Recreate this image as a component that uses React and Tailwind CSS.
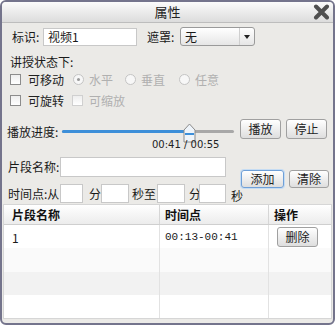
import React from 'react';

const font = { fontFamily: '"Noto Sans CJK SC", "Liberation Sans", sans-serif' };

const Btn = ({ children, active, className = '' }) => (
    <div className={`flex items-center justify-center rounded-[3px] border text-[12px] text-[#222] bg-gradient-to-b from-white to-[#dedede] ${active ? 'border-[#6fa0d8] shadow-[0_0_0_1px_#c5dcf3]' : 'border-[#a0a0a0]'} ${className}`}>
        {children}
    </div>
);

const Check = ({ disabled }) => (
    <div className={`w-[11px] h-[11px] border bg-gradient-to-b from-[#eeeeee] to-white ${disabled ? 'border-[#d0d0d0]' : 'border-[#8c8c8c]'}`} />
);

const Radio = ({ checked }) => (
    <div className="w-[11px] h-[11px] rounded-full border border-[#c4c4c4] bg-[#f7f7f7] flex items-center justify-center">
        {checked && <div className="w-[3px] h-[3px] rounded-full bg-[#9a9a9a]" />}
    </div>
);

const Field = ({ className = '' }) => (
    <div className={`bg-white border border-[#c8c8c8] ${className}`} />
);

export default function App() {
    const rows = [
        { name: '1', time: '00:13-00:41', bg: 'bg-white' },
        { bg: 'bg-[#fafafa]' },
        { bg: 'bg-[#f2f2f2]' },
        { bg: 'bg-white' },
    ];

    return (
        <div className="w-[335px] h-[325px] bg-white" style={font}>
            <div className="w-full h-full flex flex-col rounded-[6px] border-2 border-[#74748c] bg-[#ebeae7] overflow-hidden text-[12px] text-[#1a1a1a]">
                {/* 标题栏 */}
                <div className="relative h-[21px] shrink-0 flex items-center justify-center bg-gradient-to-b from-[#fbfbfb] to-[#dcdcdc] border-b border-[#bdbdbd]">
                    <span className="text-[13px] text-[#222]">属性</span>
                    <svg className="absolute right-[3px] top-[2px]" width="17" height="16" viewBox="0 0 17 16">
                        <path d="M3 2.5 L14 13.5 M14 2.5 L3 13.5" stroke="#4f4f4f" strokeWidth="4" strokeLinecap="round" />
                    </svg>
                </div>

                {/* 标识 / 遮罩 */}
                <div className="mt-[4px] h-[19px] flex items-center pl-[10px]">
                    <span className="w-[31px]">标识:</span>
                    <div className="w-[94px] h-[18px] bg-white border border-[#c8c8c8] flex items-center pl-[4px] text-[12px]">视频1</div>
                    <span className="ml-[10px] w-[33px]">遮罩:</span>
                    <div className="w-[75px] h-[19px] rounded-[3px] border border-[#9a9a9a] bg-gradient-to-b from-white to-[#e6e6e6] flex items-center">
                        <span className="flex-1 pl-[4px]">无</span>
                        <div className="w-[15px] h-full border-l border-[#cfcfcf] flex items-center justify-center">
                            <svg width="6" height="4" viewBox="0 0 6 4"><path d="M0 0 H6 L3 4 Z" fill="#222" /></svg>
                        </div>
                    </div>
                </div>

                <div className="mt-[7px] h-[17px] flex items-center pl-[8px]">讲授状态下:</div>

                <div className="mt-[1px] h-[17px] flex items-center pl-[8px] gap-[7px]">
                    <Check />
                    <span className="text-[#222]">可移动</span>
                    <div className="ml-[2px] flex items-center gap-[5px] text-[#b0b0b0]"><Radio checked /><span>水平</span></div>
                    <div className="ml-[5px] flex items-center gap-[5px] text-[#b0b0b0]"><Radio /><span>垂直</span></div>
                    <div className="ml-[7px] flex items-center gap-[5px] text-[#b0b0b0]"><Radio /><span>任意</span></div>
                </div>

                <div className="mt-[4px] h-[17px] flex items-center pl-[8px] gap-[7px]">
                    <Check />
                    <span className="text-[#222]">可旋转</span>
                    <div className="ml-[1px] flex items-center gap-[6px] text-[#b0b0b0]"><Check disabled /><span>可缩放</span></div>
                </div>

                {/* 播放进度 */}
                <div className="mt-[12px] h-[30px] flex items-start pl-[5px]">
                    <span className="w-[55px] mt-[2px]">播放进度:</span>
                    <div className="relative w-[172px] h-[30px]">
                        <div className="absolute left-0 right-0 top-[9px] h-[3px] rounded-full bg-[#a8a8a8]" />
                        <div className="absolute left-0 w-[127px] top-[9px] h-[3px] rounded-full bg-[#3d8fd9]" />
                        <svg className="absolute left-[121px] top-[2px]" width="13" height="20" viewBox="0 0 13 20">
                            <path d="M1 19 L1 7 L6.5 1 L12 7 L12 19 Z" fill="#eef4fa" stroke="#8a8a8a" strokeWidth="1" />
                            <path d="M2 11 L11 11" stroke="#3d8fd9" strokeWidth="2" />
                        </svg>
                        <span className="absolute left-[90px] top-[16px] text-[10px] text-[#222] whitespace-nowrap" style={{ fontFamily: '"DejaVu Sans", sans-serif' }}>00:41 / 00:55</span>
                    </div>
                    <Btn className="ml-[6px] w-[41px] h-[20px] -mt-[2px]">播放</Btn>
                    <Btn className="ml-[5px] w-[41px] h-[20px] -mt-[2px]">停止</Btn>
                </div>

                {/* 片段 */}
                <div className="mt-[6px] flex items-center pl-[6px]">
                    <div className="flex flex-col">
                        <div className="h-[20px] flex items-center">
                            <span className="w-[52px]">片段名称:</span>
                            <Field className="w-[166px] h-[20px]" />
                        </div>
                        <div className="mt-[7px] h-[19px] flex items-center">
                            <span className="w-[52px]">时间点:从</span>
                            <Field className="w-[23px] h-[19px]" />
                            <span className="ml-[6px] w-[12px]">分</span>
                            <Field className="w-[28px] h-[19px]" />
                            <span className="ml-[3px] w-[25px]">秒至</span>
                            <Field className="w-[28px] h-[19px]" />
                            <span className="ml-[4px] w-[10px]">分</span>
                            <Field className="w-[27px] h-[19px]" />
                            <span className="ml-[5px] mt-[4px]">秒</span>
                        </div>
                    </div>
                    <Btn active className="ml-[-2px] w-[43px] h-[18px] -mt-[2px]">添加</Btn>
                    <Btn className="ml-[5px] w-[40px] h-[18px] -mt-[2px]">清除</Btn>
                </div>

                {/* 列表 */}
                <div className="mt-[1px] mx-[1px] flex-1 mb-[4px] border border-[#d6d6d6] bg-white flex flex-col">
                    <div className="h-[20px] flex bg-gradient-to-b from-white to-[#ececec] border-b border-[#cfcfcf] font-bold text-[#111]">
                        <div className="w-[156px] pl-[8px] flex items-center border-r border-[#d6d6d6]">片段名称</div>
                        <div className="w-[109px] pl-[5px] flex items-center border-r border-[#d6d6d6]">时间点</div>
                        <div className="flex-1 pl-[5px] flex items-center">操作</div>
                    </div>
                    <div className="flex-1 flex flex-col">
                        {rows.map((r, i) => (
                            <div key={i} className={`flex-1 flex ${r.bg}`}>
                                <div className="w-[156px] pl-[8px] pt-[4px] border-r border-[#e2e2e2]">{r.name}</div>
                                <div className="w-[109px] pl-[5px] pt-[4px] border-r border-[#e2e2e2] text-[11px]" style={{ fontFamily: '"Liberation Mono", monospace' }}>{r.time}</div>
                                <div className="flex-1 pl-[8px] pt-[2px]">
                                    {r.name && <Btn className="w-[41px] h-[20px]">删除</Btn>}
                                </div>
                            </div>
                        ))}
                    </div>
                </div>
            </div>
        </div>
    );
}
